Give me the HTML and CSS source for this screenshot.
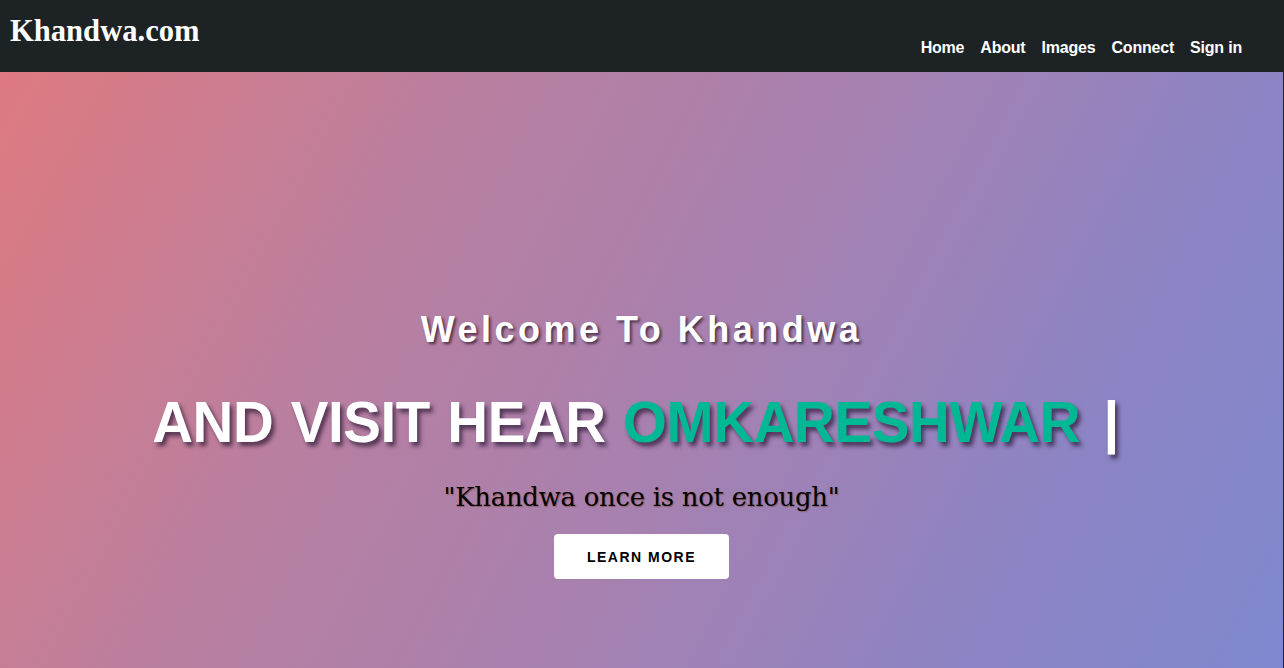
FILE: index.html
```html
<!DOCTYPE html>
<html lang="en">
<head>
<meta charset="utf-8">
<title>Khandwa.com</title>
<link rel="stylesheet" href="styles.css">
</head>
<body>
<header class="topbar">
  <a class="logo" href="#">Khandwa.com</a>
  <nav class="nav">
    <a href="#">Home</a>
    <a href="#">About</a>
    <a href="#">Images</a>
    <a href="#">Connect</a>
    <a href="#">Sign in</a>
  </nav>
</header>
<main class="hero">
  <h2 class="welcome">Welcome To Khandwa</h2>
  <h1 class="headline">AND VISIT HEAR <span class="place">OMKARESHWAR</span> <span class="cursor">|</span></h1>
  <p class="tagline">"Khandwa once is not enough"</p>
  <a class="btn" href="#">LEARN MORE</a>
</main>
</body>
</html>
```
FILE: styles.css
```css
* { box-sizing: border-box; }
html, body { height: 100%; }
body {
  margin: 0;
  font-family: "Liberation Sans", Arial, sans-serif;
  background: #1d2324;
  overflow: hidden;
}
a { text-decoration: none; }

.topbar {
  height: 72px;
  background: #1d2324;
  display: flex;
  justify-content: space-between;
  align-items: flex-start;
  padding: 0 42px 0 10px;
}
.logo {
  font-family: "Liberation Serif", "Times New Roman", serif;
  font-weight: bold;
  font-size: 30.6px;
  color: #fff;
  margin-top: 14px;
  line-height: 34px;
}
.nav {
  display: flex;
  gap: 16px;
  margin-top: 38px;
}
.nav a {
  color: #fff;
  font-weight: bold;
  font-size: 16px;
  line-height: 20px;
  letter-spacing: -0.2px;
}

.hero {
  height: calc(100% - 72px);
  background: linear-gradient(118deg, #de7a80 0%, #b97fa0 30%, #a681b0 55%, #8c84c4 80%, #7f88cf 100%);
  display: flex;
  flex-direction: column;
  align-items: center;
  padding-top: 236px;
  margin-right: 1px;
}
.welcome {
  margin: 0;
  color: #fff;
  font-size: 36px;
  line-height: 44px;
  letter-spacing: 3.5px;
  font-weight: bold;
  text-shadow: 2px 2px 3px rgba(40, 20, 40, 0.75);
}
.headline {
  margin: 38px 0 0;
  padding-right: 12px;
  color: #fff;
  font-size: 56.5px;
  line-height: 66px;
  font-weight: bold;
  letter-spacing: -0.4px;
  word-spacing: 2px;
  text-shadow: 3px 4px 4px rgba(40, 20, 50, 0.7);
  white-space: nowrap;
}
.place { color: #00b894; }
.cursor { margin-left: 6px; }
.tagline {
  margin: 25px 0 0;
  font-family: "DejaVu Serif", Georgia, serif;
  font-size: 25.8px;
  line-height: 32px;
  letter-spacing: -0.2px;
  color: #000;
  text-shadow: 1px 1px 1px rgba(120, 60, 30, 0.5);
}
.btn {
  margin-top: 21px;
  width: 175px;
  height: 45px;
  background: #fff;
  border-radius: 4px;
  display: flex;
  align-items: center;
  justify-content: center;
  color: #000;
  font-weight: bold;
  font-size: 14px;
  letter-spacing: 1.5px;
}
```
